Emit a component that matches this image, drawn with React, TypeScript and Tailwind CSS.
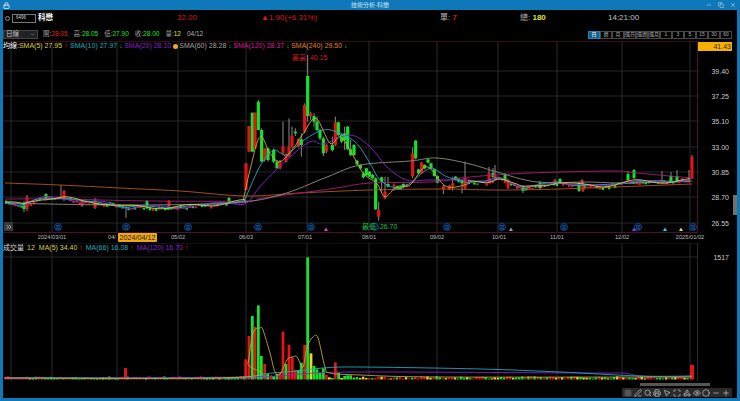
import { Lock, Minus, Copy, X, ChevronsRight, ChevronDown, Search, Printer, MousePointer2, Plus, Circle, Eye, PenLine, Square, Maximize, Shapes } from 'lucide-react';

const FONT = '"Liberation Sans", "Noto Sans CJK TC", sans-serif';
const RED = '#e31414';
const GREEN = '#16e02a';

const tabs = ['日', '週', '月', '還日', '還週', '還月', '1', '3', '5', '15', '30', '60'];
const priceTicks = [['39.40', 71], ['37.25', 96], ['35.10', 121], ['33.00', 147], ['30.85', 172], ['28.70', 197], ['26.55', 223]] as const;
const vLines = [11, 52, 117, 178, 246, 307, 369, 437, 498, 557, 622, 690];
const dates = [['2024/03/01', 52], ['04/', 112], ['05/02', 178], ['06/03', 246], ['07/01', 305], ['08/01', 369], ['09/02', 437], ['10/01', 499], ['11/01', 557], ['12/02', 622], ['2025/01/02', 690]] as const;
const monthDots = [58, 126, 188, 258, 311, 375, 447, 502, 564, 638, 693];
const marks = [[326, '#e040c0'], [511, '#999999'], [634, '#a030e0'], [665, '#30d0e0'], [681, '#e0e040']] as const;

// candle: x, top, bottom, wick top, wick bottom, colour (zoomed crop coordinates, 230/70 origin, 3x)
const bigCandles: [number, number, number, number, number, 'r' | 'g'][] = [
  [48, 280, 360, 280, 360, 'r'], [57, 168, 245, 168, 245, 'r'], [67, 128, 245, 128, 245, 'g'], [75, 128, 235, 128, 235, 'r'],
  [85, 95, 180, 90, 180, 'g'], [95, 180, 275, 175, 275, 'g'], [104, 235, 270, 235, 275, 'r'], [114, 235, 270, 235, 275, 'g'],
  [131, 240, 275, 235, 280, 'g'], [141, 275, 295, 270, 295, 'g'], [150, 275, 295, 270, 298, 'r'], [159, 230, 250, 155, 255, 'r'],
  [168, 255, 275, 250, 278, 'r'], [177, 230, 260, 145, 262, 'r'], [186, 197, 230, 170, 235, 'r'], [196, 185, 190, 175, 198, 'g'],
  [205, 208, 230, 205, 232, 'r'], [214, 208, 225, 190, 260, 'g'], [224, 105, 185, 100, 190, 'r'], [233, 18, 138, -45, 155, 'g'],
  [242, 130, 138, 125, 150, 'r'], [252, 138, 155, 130, 170, 'g'], [261, 155, 180, 140, 185, 'g'], [270, 180, 205, 175, 210, 'g'],
  [280, 205, 250, 200, 258, 'g'], [289, 225, 245, 222, 250, 'r'], [307, 225, 240, 200, 245, 'g'], [316, 157, 225, 140, 228, 'r'],
  [325, 157, 195, 155, 198, 'g'], [335, 195, 215, 190, 220, 'g'], [344, 190, 210, 170, 240, 'g'], [353, 170, 238, 168, 240, 'g'],
  [362, 238, 255, 210, 258, 'g'], [372, 225, 255, 222, 258, 'g'], [381, 272, 282, 270, 285, 'g'], [391, 285, 295, 283, 298, 'g'],
  [400, 310, 322, 305, 325, 'g'], [409, 295, 315, 293, 318, 'g'], [418, 305, 320, 303, 322, 'g'], [428, 315, 325, 312, 328, 'g'],
  [437, 325, 418, 322, 420, 'g'], [446, 420, 440, 395, 452, 'r'], [455, 322, 335, 320, 365, 'g'], [465, 365, 385, 320, 388, 'r'],
  [474, 342, 350, 320, 352, 'g'], [492, 345, 350, 340, 362, 'r'], [502, 350, 358, 347, 360, 'g'], [511, 350, 358, 347, 360, 'g'],
  [520, 342, 352, 340, 355, 'g'], [530, 345, 350, 342, 352, 'r'], [548, 250, 318, 232, 325, 'r'], [557, 212, 265, 210, 268, 'g'],
  [566, 298, 310, 296, 314, 'g'], [575, 278, 310, 276, 312, 'r'], [584, 285, 295, 283, 298, 'g'], [594, 268, 278, 266, 280, 'g'],
  [603, 280, 295, 278, 298, 'g'], [613, 298, 318, 296, 320, 'g'], [622, 318, 338, 316, 340, 'g'], [640, 348, 358, 345, 372, 'r'],
  [658, 348, 358, 345, 360, 'r'], [668, 340, 350, 320, 362, 'r'], [677, 320, 330, 318, 332, 'g'], [686, 325, 335, 323, 338, 'g'],
  [696, 330, 340, 328, 370, 'g'], [705, 322, 355, 275, 360, 'r'],
];

// extra candles outside the rally, page coordinates: x, top, bottom, wick top, wick bottom, colour
const sideCandles: [number, number, number, number, number, 'r' | 'g'][] = [
  [27, 197, 209, 195, 211, 'r'], [24, 203, 209, 201, 212, 'g'], [61, 196, 198, 185, 199, 'r'], [64, 191, 200, 190, 201, 'r'],
  [46, 194, 198, 193, 199, 'g'], [82, 201, 206, 200, 207, 'r'], [95, 199, 208, 198, 209, 'r'], [126, 207, 208, 207, 218, 'g'],
  [147, 201, 205, 200, 206, 'g'], [169, 201, 206, 200, 207, 'r'], [229, 198, 203, 197, 204, 'g'],
  [489, 173, 181, 167, 182, 'r'], [493, 173, 177, 168, 178, 'g'], [495, 175, 178, 165, 179, 'r'], [505, 175, 180, 173, 181, 'g'],
  [508, 180, 188, 179, 189, 'r'], [523, 186, 191, 185, 193, 'g'], [540, 183, 188, 181, 190, 'g'], [555, 180, 184, 179, 185, 'r'],
  [560, 179, 182, 178, 184, 'g'], [582, 180, 183, 179, 184, 'r'], [579, 183, 191, 182, 192, 'g'], [583, 184, 191, 182, 192, 'r'],
  [628, 174, 180, 171, 181, 'g'], [634, 170, 178, 169, 179, 'g'], [662, 180, 182, 171, 183, 'r'], [671, 176, 181, 172, 182, 'g'],
  [677, 176, 181, 170, 182, 'g'], [682, 179, 181, 178, 182, 'r'], [689, 178, 180, 170, 181, 'r'], [692, 157, 178, 155, 179, 'r'],
];

const volZoom: [number, number, 'r' | 'g' | 'y'][] = [
  [47, 328, 'r'], [57, 258, 'r'], [67, 198, 'g'], [75, 230, 'r'], [85, 166, 'g'], [94, 318, 'g'], [104, 342, 'r'], [113, 372, 'g'],
  [122, 376, 'r'], [131, 378, 'g'], [141, 372, 'g'], [150, 368, 'r'], [159, 245, 'r'], [168, 342, 'g'], [177, 284, 'r'], [187, 322, 'r'],
  [196, 360, 'r'], [205, 360, 'g'], [214, 338, 'g'], [224, 285, 'r'], [233, 22, 'g'], [243, 310, 'y'], [252, 348, 'g'], [261, 358, 'g'],
  [270, 368, 'g'], [280, 355, 'g'], [289, 375, 'r'], [298, 382, 'y'], [307, 384, 'g'], [316, 337, 'r'], [326, 368, 'g'], [335, 384, 'y'],
  [344, 378, 'g'], [353, 376, 'g'], [362, 376, 'g'], [372, 384, 'g'],
];

const zx = (x: number) => 230 + x / 3;
const zy = (y: number) => 70 + y / 3;
const fromZoom = (list: number[][]) => list.map(([x, y]) => [zx(x), zy(y)]);

// catmull-rom through the points so the averages read as curves
function smooth(list: number[][]) {
  let d = `M${list[0][0]} ${list[0][1]}`;
  for (let i = 0; i < list.length - 1; i++) {
    const p0 = list[Math.max(i - 1, 0)];
    const p1 = list[i];
    const p2 = list[i + 1];
    const p3 = list[Math.min(i + 2, list.length - 1)];
    const c1 = [p1[0] + (p2[0] - p0[0]) / 6, p1[1] + (p2[1] - p0[1]) / 6];
    const c2 = [p2[0] - (p3[0] - p1[0]) / 6, p2[1] - (p3[1] - p1[1]) / 6];
    d += ` C${c1[0]} ${c1[1]} ${c2[0]} ${c2[1]} ${p2[0]} ${p2[1]}`;
  }
  return d;
}

const leftMid = [[5, 202], [23, 205], [43, 198], [63, 197], [83, 202], [107, 203], [127, 207], [157, 207], [177, 207], [207, 205], [230, 202], [246, 201]];
const rightMid = [[468, 182], [487, 182], [500, 177], [510, 182], [523, 188], [542, 185], [558, 182], [580, 185], [603, 186], [627, 182], [637, 181], [663, 182], [690, 180]];

function interp(list: number[][], x: number) {
  for (let i = 1; i < list.length; i++) {
    if (x <= list[i][0]) {
      const t = (x - list[i - 1][0]) / (list[i][0] - list[i - 1][0]);
      return list[i - 1][1] + (list[i][1] - list[i - 1][1]) * t;
    }
  }
  return list[list.length - 1][1];
}

let seed = 7;
const rnd = () => {
  seed = (seed * 16807) % 2147483647;
  return seed / 2147483647;
};

const smallCandles: [number, number, number, 'r' | 'g'][] = [];
const smallVols: [number, number, 'r' | 'g' | 'y'][] = [];
for (let x = 6; x < 690; x += 3.06) {
  if (x > 246 && x < 468) continue;
  const mid = interp(x < 300 ? leftMid : rightMid, x);
  smallCandles.push([x, mid + (rnd() - 0.5) * 3, 1 + rnd() * 2, rnd() > 0.55 ? 'r' : 'g']);
}
for (let x = 5; x < 690; x += 3.06) {
  if (x > 246 && x < 352) continue;
  const r = rnd();
  smallVols.push([x, 1 + rnd() * 2.2, r > 0.6 ? 'r' : r > 0.2 ? 'g' : 'y']);
}

const waves = (list: number[][], amp: number, phase: number) => {
  const out: number[][] = [];
  for (let x = list[0][0]; x <= list[list.length - 1][0]; x += 6) {
    out.push([x, interp(list, x) + Math.sin(x / 9 + phase) * amp]);
  }
  return out;
};

const Curve = ({ d, color }: { d: string; color: string }) => (
  <path d={d} fill="none" stroke={color} strokeWidth="0.9" strokeLinejoin="round" />
);

function PriceChart() {
  return (
    <svg width="733" height="202" viewBox="3 41 733 202" className="block">
      {priceTicks.map(([, y]) => <line key={y} x1="3" x2="699" y1={y} y2={y} stroke="#262626" />)}
      {vLines.map(x => <line key={x} x1={x} x2={x} y1="41" y2="232" stroke="#2a2a2a" />)}
      <line x1="3" x2="697" y1="41.5" y2="41.5" stroke="#3a0c16" />
      <line x1="3" x2="698" y1="232.5" y2="232.5" stroke="#4a1226" />
      <line x1="697.5" x2="697.5" y1="41" y2="232" stroke="#4a1226" />

      {smallCandles.map(([x, y, h, c], i) => (
        <rect key={i} x={x - 1} y={y} width="2.4" height={h} fill={c === 'r' ? RED : GREEN} />
      ))}
      {sideCandles.map(([x, t, b, wt, wb, c], i) => (
        <g key={i}>
          <line x1={x} x2={x} y1={wt} y2={wb} stroke="#8a8a8a" />
          <rect x={x - 1.5} y={t} width="3" height={b - t} fill={c === 'r' ? RED : GREEN} />
        </g>
      ))}
      {bigCandles.map(([x, t, b, wt, wb, c], i) => (
        <g key={i}>
          <line x1={zx(x)} x2={zx(x)} y1={zy(wt)} y2={zy(wb)} stroke="#8a8a8a" />
          <rect x={zx(x) - 1.6} y={zy(t)} width="3.2" height={(b - t) / 3} fill={c === 'r' ? RED : GREEN} />
        </g>
      ))}

      <Curve color="#b4561c" d={smooth([[5, 183], [60, 185], [120, 188], [180, 191], [246, 196], [300, 193], [370, 190], [440, 189], [500, 190], [560, 189], [640, 186], [692, 184]])} />
      <Curve color="#a81c78" d={smooth([[5, 199], [60, 199], [150, 201], [246, 201], [263, 198], [330, 189], [370, 183], [430, 182], [470, 177], [530, 173], [613, 171], [637, 173], [692, 178]])} />
      <Curve color="#8d8d80" d={smooth([[5, 203], [120, 205], [230, 203], [280, 195], [327, 177], [360, 165], [410, 161], [437, 158], [470, 164], [497, 172], [537, 182], [587, 182], [627, 183], [692, 181]])} />
      <Curve color="#8a22c8" d={smooth(fromZoom([[0, 400], [50, 400], [90, 350], [170, 270], [240, 215], [280, 222], [360, 195], [420, 230], [470, 290], [530, 330], [600, 330], [720, 330]]))} />
      <Curve color="#1fa8c4" d={smooth(fromZoom([[40, 400], [70, 330], [95, 280], [130, 240], [170, 255], [215, 215], [280, 180], [330, 190], [380, 220], [420, 280], [450, 330], [500, 355], [540, 340], [600, 295], [650, 320], [720, 340]]))} />
      <Curve color="#d2a838" d={smooth(fromZoom([[40, 390], [60, 300], [90, 200], [120, 250], [150, 275], [190, 235], [220, 190], [258, 145], [300, 220], [330, 200], [360, 240], [400, 310], [440, 340], [465, 380], [500, 350], [540, 345], [590, 290], [650, 350], [720, 340]]))} />
      <Curve color="#8a22c8" d={smooth(waves(leftMid, 1.6, 0))} />
      <Curve color="#1fa8c4" d={smooth(waves(leftMid, 1.2, 1.4))} />
      <Curve color="#d2c850" d={smooth(waves(leftMid, 1.8, 2.6))} />
      <Curve color="#1fa8c4" d={smooth(waves(rightMid, 1.2, 0.8))} />
      <Curve color="#8a22c8" d={smooth(waves(rightMid, 1, 2))} />
      <Curve color="#d2c850" d={smooth(waves(rightMid, 1.4, 3.2))} />

      {monthDots.map(x => (
        <g key={x}>
          <circle cx={x} cy="227" r="3.6" fill="#04142e" stroke="#104a96" strokeWidth="0.8" />
          {x !== 375 && <text x={x} y="229" textAnchor="middle" fontSize="5" fill="#2a70c0" fontFamily={FONT}>月</text>}
        </g>
      ))}
      {marks.map(([x, c]) => <polygon key={x} points={`${x - 2},231 ${x + 2},231 ${x},227.5`} fill={c} />)}

      <text x="292" y="60" fontSize="7" fill="#d81c1c" fontFamily={FONT}>最高: 40.15</text>
      <text x="362" y="229" fontSize="7" fill="#20c040" fontFamily={FONT}>最低: 26.70</text>

      {priceTicks.map(([t, y]) => (
        <text key={t} x="729" y={y + 2.5} textAnchor="end" fontSize="7" fill="#c8c8c8" fontFamily={FONT}>{t}</text>
      ))}
      {dates.map(([t, x]) => (
        <text key={t} x={x} y="239" textAnchor="middle" fontSize="5.7" fill="#b8b8b8" fontFamily={FONT}>{t}</text>
      ))}
    </svg>
  );
}

function VolumeChart() {
  return (
    <svg width="733" height="142" viewBox="3 243 733 142" className="block">
      <line x1="3" x2="699" y1="243" y2="243" stroke="#222222" />
      <line x1="3" x2="697" y1="257" y2="257" stroke="#262626" />
      {vLines.map(x => <line key={x} x1={x} x2={x} y1="243" y2="381" stroke="#2a2a2a" />)}
      <line x1="697.5" x2="697.5" y1="243" y2="381" stroke="#2a2a2a" />

      {smallVols.map(([x, h, c], i) => (
        <rect key={i} x={x - 1} y={379.5 - h} width="2.4" height={h} fill={c === 'r' ? RED : c === 'g' ? GREEN : '#e8d820'} />
      ))}
      {volZoom.map(([x, top, c], i) => (
        <rect key={i} x={230 + x / 3 - 1.4} y={250 + top / 3} width="2.8" height={379.5 - (250 + top / 3)} fill={c === 'r' ? RED : c === 'g' ? GREEN : '#e8d820'} />
      ))}
      <rect x="124" y="368" width="3" height="11.5" fill={RED} />
      <rect x="690" y="365" width="4" height="14.5" fill={RED} />

      <Curve color="#8a22c8" d={smooth([[5, 378], [246, 377], [300, 374], [360, 372], [590, 373], [623, 373], [640, 376], [673, 377], [692, 376]])} />
      <Curve color="#1fa8c4" d={smooth([[5, 378], [243, 378], [263, 374], [297, 371], [323, 368], [360, 367], [480, 369], [560, 372], [640, 376], [692, 376]])} />
      <Curve color="#b8aa44" d={smooth([[5, 378], [243, 377], [248, 363], [253, 333], [260, 328], [263, 330], [270, 353], [275, 372], [280, 374], [287, 360], [292, 357], [297, 357], [303, 367], [307, 347], [313, 337], [318, 338], [325, 367], [330, 373], [360, 375], [440, 377], [692, 377]])} />

      <text x="729" y="259.5" textAnchor="end" fontSize="7" fill="#c8c8c8" fontFamily={FONT}>1517</text>
    </svg>
  );
}

export default function App() {
  return (
    <div className="w-[740px] h-[401px] flex flex-col overflow-hidden bg-[#0e78b8]" style={{ fontFamily: FONT }}>
      {/* title bar */}
      <div className="h-[10px] relative flex items-center justify-between px-[3px] text-white shrink-0">
        <Lock size={7} strokeWidth={2.5} />
        <span className="absolute left-1/2 -translate-x-1/2 text-[6px] leading-none text-[#cfe6f5]">技術分析-科懋</span>
        <div className="flex items-center gap-[6px] pr-[1px] text-[#cfe6f5]">
          <Minus size={6} />
          <Copy size={6} />
          <X size={6} />
        </div>
      </div>

      <div className="relative flex-1 mx-[3px] mb-[3px] bg-black flex flex-col min-h-0">
        {/* quote row */}
        <div className="h-[16px] flex items-center text-[8px] leading-none shrink-0 relative">
          <span className="ml-[2px] w-[5px] h-[5px] rounded-full border border-[#888888]" />
          <span className="ml-[2px] w-[24px] h-[9px] border border-[#777777] text-[4.5px] text-[#d0d0d0] flex items-center pl-[3px]">6496</span>
          <span className="ml-[2px] text-white font-bold text-[7.5px]">科懋</span>
          <span className="absolute left-[174px] text-[#d01a1a]">32.00</span>
          <span className="absolute left-[258px] text-[#d01a1a]">▲1.90(+6.31%)</span>
          <span className="absolute left-[437px] text-[#b0b0b0]">單: <span className="text-[#d01a1a] font-bold">7</span></span>
          <span className="absolute left-[517px] text-[#b0b0b0]">總: <span className="text-[#e0e030] font-bold">180</span></span>
          <span className="absolute left-[605px] text-[#c0c0c0]">14:21:00</span>
        </div>

        {/* period row */}
        <div className="h-[15px] pb-[2px] flex items-end text-[6.5px] leading-none shrink-0">
          <div className="w-[35px] h-[9px] bg-[#222222] border border-[#444444] flex items-center justify-between px-[2px] text-[#c8c8c8]">
            <span>日線</span>
            <ChevronDown size={5} />
          </div>
          <div className="ml-[5px] h-[9px] flex items-center gap-[6px] text-[#a0a0a0]">
            <span>開:<span className="text-[#e02020]">28.05</span></span>
            <span>高:<span className="text-[#20e020]">28.05</span></span>
            <span>低:<span className="text-[#20e020]">27.90</span></span>
            <span>收:<span className="text-[#20e020]">28.00</span></span>
            <span>量:<span className="text-[#e0e030]">12</span></span>
            <span className="text-[#b0b0b0]">04/12</span>
          </div>
          <div className="ml-auto mr-[5px] flex mb-[0.5px]">
            {tabs.map((t, i) => (
              <span key={t} className={i === 0
                ? 'w-[12px] h-[8px] flex items-center justify-center text-[5px] text-white bg-[#14608c] border border-[#2a80b4]'
                : 'w-[12px] h-[8px] flex items-center justify-center text-[5px] text-[#b0b0b0] border border-[#484848]'}>{t}</span>
            ))}
          </div>
        </div>

        {/* price pane */}
        <div className="relative shrink-0 h-[202px]">
          <PriceChart />
          <div className="absolute left-0 top-0 h-[10px] w-[350px] text-[7px] leading-[10px] whitespace-nowrap flex items-center gap-[1.5px]">
            <span className="text-white -mr-[1.5px]">均線:</span>
            <span className="text-[#d8d040] mr-[1px]">SMA(5) 27.95 <span className="text-[#e02020]">↑</span></span>
            <span className="text-[#20a8b8]">SMA(10) 27.97 <span className="text-[#20c040]">↓</span></span>
            <span className="text-[#8a22c8]">SMA(20) 28.10</span>
            <span className="w-[5px] h-[5px] rounded-full bg-[#f0a820] shrink-0" />
            <span className="text-[#a0a0a0]">SMA(60) 28.28 <span className="text-[#20c040]">↓</span></span>
            <span className="text-[#d81c98]">SMA(120) 28.37 <span className="text-[#20c040]">↓</span></span>
            <span className="text-[#e08020]">SMA(240) 29.50 <span className="text-[#20c040]">↓</span></span>
          </div>
          <div className="absolute right-[5px] top-[1px] w-[34px] h-[9px] bg-[#f5b000] text-[#3a2a00] text-[7px] leading-[9px] text-right pr-[1px]">41.43</div>
          <div className="absolute left-[115px] top-[192px] w-[39px] h-[9px] bg-[#f0a818] text-[#1a1a1a] text-[7.2px] leading-[9px] text-center rounded-[1px]">2024/04/12</div>
          <div className="absolute left-[1px] top-[181px] w-[9px] h-[9px] bg-[#3a3a3a] text-[#d0d0d0] flex items-center justify-center">
            <ChevronsRight size={8} />
          </div>
          <div className="absolute right-0 top-[154px] w-[4px] h-[20px] bg-[#707070]" />
        </div>

        {/* volume pane */}
        <div className="relative flex-1 min-h-0">
          <VolumeChart />
          <div className="absolute left-0 top-0 h-[9px] flex items-center gap-[3px] text-[7px] leading-none whitespace-nowrap">
            <span className="text-[#d8d8d8]">成交量</span>
            <span className="text-[#d8d040] mr-[1px]">12</span>
            <span className="text-[#d8d040]">MA(5) 34.40 <span className="text-[#e02020]">↑</span></span>
            <span className="text-[#20a8b8]">MA(66) 16.08 <span className="text-[#e02020]">↑</span></span>
            <span className="text-[#8a22c8]">MA(120) 16.70 <span className="text-[#e02020]">↑</span></span>
          </div>
          <div className="absolute left-[637px] top-[140px] w-[70px] h-[3px] bg-[#555555]" />
          <div className="absolute left-[619px] top-[145px] w-[110px] h-[9px] bg-[#2a2a2a] flex items-center justify-between px-[2px] text-[#c8c8c8]">
            <Square size={8} className="text-[#555555]" fill="#555555" />
            <PenLine size={8} />
            <Search size={8} />
            <Printer size={8} />
            <MousePointer2 size={8} />
            <Maximize size={8} />
            <Shapes size={8} />
            <Eye size={8} />
            <Circle size={8} />
            <Minus size={8} />
            <Plus size={8} />
          </div>
        </div>
      </div>
    </div>
  );
}
